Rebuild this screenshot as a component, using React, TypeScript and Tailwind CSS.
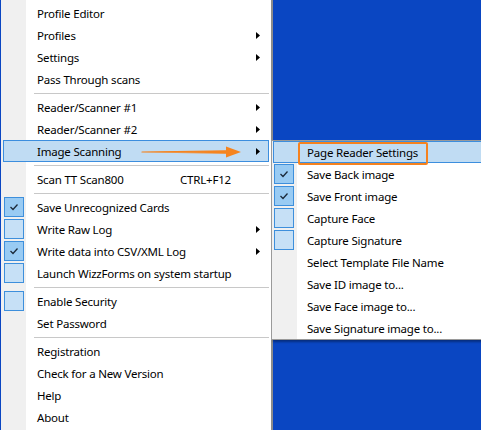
import React from "react";

type Item =
  | { sep: true }
  | {
      sep?: false;
      label: string;
      sub?: boolean;
      check?: "on" | "off";
      hot?: boolean;
      shortcut?: string;
    };

const mainItems: Item[] = [
  { label: "Profile Editor" },
  { label: "Profiles", sub: true },
  { label: "Settings", sub: true },
  { label: "Pass Through scans" },
  { sep: true },
  { label: "Reader/Scanner #1", sub: true },
  { label: "Reader/Scanner #2", sub: true },
  { label: "Image Scanning", sub: true, hot: true },
  { sep: true },
  { label: "Scan TT Scan800", shortcut: "CTRL+F12" },
  { sep: true },
  { label: "Save Unrecognized Cards", check: "on" },
  { label: "Write Raw Log", check: "off", sub: true },
  { label: "Write data into CSV/XML Log", check: "on", sub: true },
  { label: "Launch WizzForms on system startup", check: "off" },
  { sep: true },
  { label: "Enable Security", check: "off" },
  { label: "Set Password" },
  { sep: true },
  { label: "Registration" },
  { label: "Check for a New Version" },
  { label: "Help" },
  { label: "About" },
];

const subItems: Item[] = [
  { label: "Page Reader Settings", hot: true },
  { label: "Save Back image", check: "on" },
  { label: "Save Front image", check: "on" },
  { label: "Capture Face", check: "off" },
  { label: "Capture Signature", check: "off" },
  { label: "Select Template File Name" },
  { label: "Save ID image to..." },
  { label: "Save Face image to..." },
  { label: "Save Signature image to..." },
];

function CheckBox({ on }: { on: boolean }) {
  return (
    <div
      className={`flex h-[20px] w-[20px] shrink-0 items-center justify-center border border-[#3d8fdc] ${
        on ? "bg-[#99cbf3]" : "bg-[#c6e0f6]"
      }`}
    >
      {on && (
        <svg width="10" height="8" viewBox="0 0 10 8">
          <path d="M1.5 4 L4 6.5 L8.5 1.5" fill="none" stroke="#1b2a3a" strokeWidth="1.3" />
        </svg>
      )}
    </div>
  );
}

function Row({ item, sepClass, padClass }: { item: Item; sepClass: string; padClass: string }) {
  if (item.sep) {
    return (
      <div className="flex h-[6px] items-center">
        <div className={`h-px bg-[#c8c8c8] ${sepClass}`} />
      </div>
    );
  }
  return (
    <div className={`h-[22px] ${padClass}`}>
      <div
        className={`flex h-full items-center border ${
          item.hot ? "border-[#3c8ede] bg-[#c0dcf3]" : "border-transparent"
        }`}
      >
        {item.check ? <CheckBox on={item.check === "on"} /> : <div className="w-[20px] shrink-0" />}
        <span
          className={`ml-[13px] mt-px whitespace-nowrap ${item.shortcut ? "w-[143px]" : "flex-1"}`}
        >
          {item.label}
        </span>
        {item.shortcut && <span className="mt-px flex-1 whitespace-nowrap">{item.shortcut}</span>}
        {item.sub && (
          <svg width="4" height="7" viewBox="0 0 4 7" className="mr-[8px]">
            <path d="M0 0 L4 3.5 L0 7 Z" fill="#000" />
          </svg>
        )}
      </div>
    </div>
  );
}

export default function App() {
  return (
    <div
      className="relative h-[430px] w-[481px] overflow-hidden bg-[#0a46c2] text-[11.5px] tracking-[-0.2px] text-black"
      style={{ fontFamily: '"Segoe UI", "Noto Sans", sans-serif' }}
    >
      {/* main context menu */}
      <div className="ml-px h-full w-[272px] border-r-2 border-[#8c8c8c] bg-[linear-gradient(to_right,#f0f0f0_25px,#ffffff_25px)] pt-[2px]">
        {mainItems.map((it, i) => (
          <Row key={i} item={it} sepClass="ml-[33px] mr-[2px] flex-1" padClass="px-[2px]" />
        ))}
      </div>

      {/* orange arrow annotation */}
      <svg className="absolute left-[140px] top-[144px]" width="104" height="16" viewBox="0 0 104 16">
        <path d="M2 8 L88 6.8 L88 9.2 Z" fill="#f5841f" stroke="#f5841f" strokeWidth="1.2" strokeLinejoin="round" />
        <path d="M86 2.5 L101 8 L86 13.5 Z" fill="#f5841f" />
      </svg>

      {/* Image Scanning submenu */}
      <div className="absolute left-[271px] top-[140px] w-[220px] border border-[#9a9a9a] bg-[linear-gradient(to_right,#f0f0f0_25px,#ffffff_25px)] shadow-[2px_2px_2px_rgba(0,0,0,0.35)]">
        {subItems.map((it, i) => (
          <Row key={i} item={it} sepClass="ml-[33px] flex-1" padClass="pl-px" />
        ))}
      </div>

      {/* orange highlight box */}
      <div className="absolute left-[298px] top-[142px] h-[23px] w-[130px] rounded-[2px] border-[2.5px] border-[#f5821f]" />
    </div>
  );
}
